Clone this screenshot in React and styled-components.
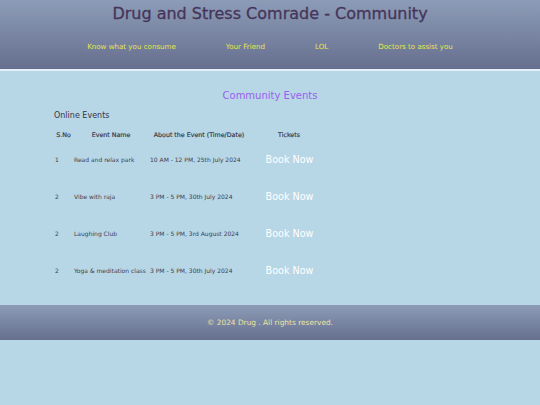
import React from "react";
import styled, { createGlobalStyle } from "styled-components";

const GlobalStyle = createGlobalStyle`
  body {
    margin: 0;
    background-color: #b7d6e6;
    font-family: "Comic Sans MS", "DejaVu Sans", sans-serif;
  }
`;

const Header = styled.header`
  height: 69px;
  display: flex;
  flex-direction: column;
  align-items: center;
  background: linear-gradient(#8c9cb7, #666f8e);
  border-bottom: 2px solid #e4f1f8;
`;
const Title = styled.h1`
  margin: 0;
  line-height: 28px;
  font-size: 16px;
  font-weight: normal;
  color: #46355a;
  -webkit-text-stroke: 0.3px #46355a;
`;
const Nav = styled.nav`
  margin-top: 12px;
  display: flex;
  gap: 50px;
`;
const NavLink = styled.a`
  line-height: 14px;
  font-size: 7.1px;
  color: #e6e84c;
  text-decoration: none;
`;

const Main = styled.main`
  padding: 18px 54px 16px;
`;
const SectionTitle = styled.h2`
  margin: 0 0 7px;
  line-height: 14px;
  font-size: 10px;
  font-weight: normal;
  text-align: center;
  color: #995ff0;
`;
const SubTitle = styled.h3`
  margin: 0 0 5px;
  line-height: 12px;
  font-size: 8px;
  font-weight: normal;
  color: #3b3448;
`;
const Table = styled.table`
  border-collapse: collapse;
  table-layout: fixed;
  width: 275px;
`;
const Th = styled.th`
  width: ${(p) => p.w}px;
  height: 14px;
  padding: 0;
  font-size: 6.3px;
  font-weight: normal;
  color: #333344;
  -webkit-text-stroke: 0.15px #333344;
  white-space: nowrap;
  text-align: center;
`;
const Td = styled.td`
  height: 37px;
  padding: 0 0 0 1px;
  font-size: 6px;
  color: #3f3f50;
  white-space: nowrap;
  text-align: ${(p) => (p.center ? "center" : "left")};
`;
const BookButton = styled.button`
  border: none;
  background: transparent;
  padding: 0;
  font-family: inherit;
  font-size: 9.6px;
  color: #ffffff;
  cursor: pointer;
`;

const Footer = styled.footer`
  height: 35px;
  display: flex;
  align-items: center;
  justify-content: center;
  background: linear-gradient(#8c9cb7, #666f8e);
  font-size: 7.4px;
  color: #ece4a2;
`;

const events = [
  { no: 1, name: "Read and relax park", time: "10 AM - 12 PM, 25th July 2024" },
  { no: 2, name: "Vibe with raja", time: "3 PM - 5 PM, 30th July 2024" },
  { no: 2, name: "Laughing Club", time: "3 PM - 5 PM, 3rd August 2024" },
  { no: 2, name: "Yoga & meditation class", time: "3 PM - 5 PM, 30th July 2024" },
];

export default function App() {
  return (
    <>
      <GlobalStyle />
      <Header>
        <Title>Drug and Stress Comrade - Community</Title>
        <Nav>
          <NavLink href="#">Know what you consume</NavLink>
          <NavLink href="#">Your Friend</NavLink>
          <NavLink href="#">LOL</NavLink>
          <NavLink href="#">Doctors to assist you</NavLink>
        </Nav>
      </Header>
      <Main>
        <SectionTitle>Community Events</SectionTitle>
        <SubTitle>Online Events</SubTitle>
        <Table>
          <thead>
            <tr>
              <Th w={19}>S.No</Th>
              <Th w={76}>Event Name</Th>
              <Th w={100}>About the Event (Time/Date)</Th>
              <Th w={80}>Tickets</Th>
            </tr>
          </thead>
          <tbody>
            {events.map((ev, i) => (
              <tr key={i}>
                <Td>{ev.no}</Td>
                <Td>{ev.name}</Td>
                <Td>{ev.time}</Td>
                <Td center>
                  <BookButton>Book Now</BookButton>
                </Td>
              </tr>
            ))}
          </tbody>
        </Table>
      </Main>
      <Footer>© 2024 Drug . All rights reserved.</Footer>
    </>
  );
}
